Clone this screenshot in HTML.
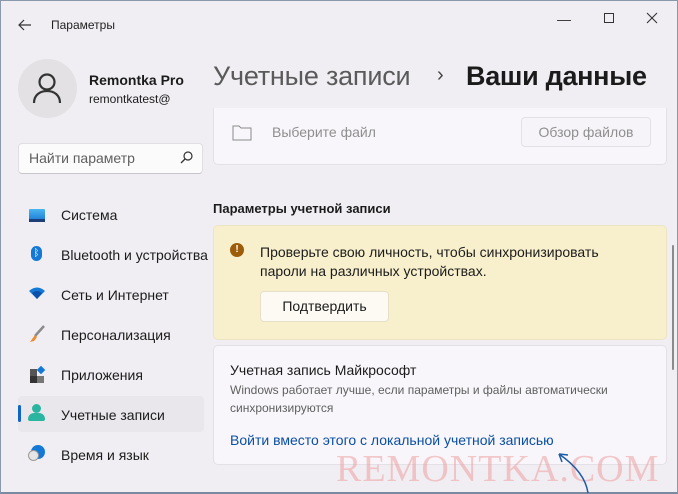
<!DOCTYPE html>
<html><head><meta charset="utf-8"><style>
*{margin:0;padding:0;box-sizing:border-box}
body{width:678px;height:494px;overflow:hidden;background:#f1eef3;font-family:"Liberation Sans","DejaVu Sans",sans-serif;color:#1b1b1b;position:relative}
.a{position:absolute;white-space:nowrap}
.frame{position:absolute;left:0;top:0;width:678px;height:494px;border:1px solid #8a98ab;border-bottom:2px solid #7a8aa0}
.card{position:absolute;background:#f8f6fa;border:1px solid #e3e0e6;border-radius:5px}
.nav{font-size:14px;color:#1b1b1b}
</style></head><body>
<div class="frame"></div>
<svg class="a" style="left:18px;top:19px" width="14" height="12" viewBox="0 0 14 12"><path d="M13 6H1M6 1L1 6l5 5" fill="none" stroke="#333" stroke-width="1.2"/></svg>
<div class="a" style="left:51px;top:18px;font-size:12px;color:#222">Параметры</div>
<div class="a" style="left:557px;top:11px;font-size:14px;color:#333">—</div>
<div class="a" style="left:604px;top:13px;width:10px;height:10px;border:1px solid #333"></div>
<svg class="a" style="left:646px;top:12px" width="12" height="12"><path d="M1 1l10 10M11 1L1 11" stroke="#333" stroke-width="1.1"/></svg>

<div class="a" style="left:18px;top:59px;width:59px;height:59px;border-radius:50%;background:#e3e1e4"></div>
<svg class="a" style="left:32px;top:72px" width="30" height="32" viewBox="0 0 30 32"><circle cx="15" cy="10" r="7.5" fill="none" stroke="#333" stroke-width="2.2"/><path d="M2 31c0-8 6-12 13-12s13 4 13 12" fill="none" stroke="#333" stroke-width="2.2"/></svg>
<div class="a" style="left:89px;top:72px;font-size:14px;font-weight:bold;color:#1b1b1b">Remontka Pro</div>
<div class="a" style="left:89px;top:92px;font-size:12px;color:#1b1b1b">remontkatest@</div>

<div class="a" style="left:18px;top:143px;width:185px;height:31px;background:#fbfbfc;border:1px solid #e0dde3;border-bottom-color:#c8c5cc;border-radius:4px"></div>
<div class="a" style="left:29px;top:150px;font-size:14px;color:#5f5f5f">Найти параметр</div>
<svg class="a" style="left:180px;top:151px" width="13" height="13"><circle cx="8" cy="5" r="4" fill="none" stroke="#333" stroke-width="1.2"/><path d="M5 8l-4 4" stroke="#333" stroke-width="1.3"/></svg>

<div class="a" style="left:18px;top:396px;width:186px;height:36px;background:#e9e6ec;border-radius:4px"></div>
<div class="a" style="left:18px;top:405px;width:3px;height:17px;background:#0f64c8;border-radius:2px"></div>
<div class="a" style="left:29px;top:209px;width:16px;height:12px;background:linear-gradient(#4bb6f0,#1a7ad4);border-radius:1px"></div>
<div class="a" style="left:29px;top:219px;width:16px;height:3px;background:#1c3f7a"></div>
<div class="a" style="left:31px;top:246px;width:11px;height:15px;border-radius:6px;background:#1479d6;color:#fff;font-size:10px;text-align:center;line-height:15px">ᛒ</div>
<svg class="a" style="left:28px;top:287px" width="18" height="13"><path d="M1 4Q9-3 17 4L9 12z" fill="#1479d6"/><path d="M4 6Q9 2 14 6L9 12z" fill="#0a4fa8"/></svg>
<svg class="a" style="left:29px;top:325px" width="16" height="18"><path d="M15 1L6 11" stroke="#8a8a8a" stroke-width="2.5"/><path d="M6 10l-5 7 4-1 3-4z" fill="#f08a28"/></svg>
<div class="a" style="left:30px;top:369px;width:7px;height:7px;background:#555"></div><div class="a" style="left:30px;top:376px;width:7px;height:7px;background:#333"></div><div class="a" style="left:37px;top:376px;width:7px;height:7px;background:#777"></div><div class="a" style="left:38px;top:367px;width:6px;height:6px;background:#1479d6;transform:rotate(45deg)"></div>
<div class="a" style="left:32px;top:404px;width:9px;height:9px;border-radius:50%;background:#2bb5a0"></div><div class="a" style="left:28px;top:413px;width:17px;height:8px;border-radius:6px 6px 2px 2px;background:#2bb5a0"></div>
<div class="a" style="left:31px;top:445px;width:14px;height:14px;border-radius:50%;background:#1479d6"></div><div class="a" style="left:28px;top:450px;width:11px;height:11px;border-radius:50%;background:#e6e6e6;border:1px solid #999"></div>
<div class="a nav" style="left:61px;top:207px">Система</div>
<div class="a nav" style="left:61px;top:247px">Bluetooth и устройства</div>
<div class="a nav" style="left:61px;top:287px">Сеть и Интернет</div>
<div class="a nav" style="left:61px;top:327px">Персонализация</div>
<div class="a nav" style="left:61px;top:367px">Приложения</div>
<div class="a nav" style="left:61px;top:407px">Учетные записи</div>
<div class="a nav" style="left:61px;top:447px">Время и язык</div>

<div class="a" style="left:213px;top:61px;font-size:27px;color:#5a5a5a;letter-spacing:-0.2px">Учетные записи</div>
<div class="a" style="left:437px;top:64px;font-size:20px;color:#444">›</div>
<div class="a" style="left:466px;top:61px;font-size:27px;font-weight:bold;color:#1b1b1b;letter-spacing:-0.3px">Ваши данные</div>

<div class="card" style="left:213px;top:108px;width:454px;height:57px;border-top:none;border-radius:0 0 5px 5px"></div>
<svg class="a" style="left:232px;top:124px" width="20" height="17"><path d="M1 2h6l2 2h10v12H1z" fill="none" stroke="#8a8a8a" stroke-width="1"/></svg>
<div class="a" style="left:272px;top:124px;font-size:14px;color:#8f8f8f">Выберите файл</div>
<div class="a" style="left:521px;top:117px;width:130px;height:30px;border:1px solid #e3e1e6;border-radius:4px;background:#f6f4f8;font-size:14px;color:#8f8f8f;text-align:center;line-height:28px">Обзор файлов</div>

<div class="a" style="left:213px;top:201px;font-size:13px;font-weight:bold;color:#1b1b1b">Параметры учетной записи</div>
<div class="card" style="left:213px;top:225px;width:454px;height:115px;background:#f8f0cd;border-color:#ebe4c2"></div>
<div class="a" style="left:230px;top:243px;width:14px;height:14px;border-radius:50%;background:#9d5c0a;color:#fff;font-size:10px;font-weight:bold;text-align:center;line-height:14px">!</div>
<div class="a" style="left:260px;top:243px;font-size:14px;line-height:19px;color:#1b1b1b">Проверьте свою личность, чтобы синхронизировать<br>пароли на различных устройствах.</div>
<div class="a" style="left:260px;top:291px;width:129px;height:31px;background:#fcfaf3;border:1px solid #e6e0c8;border-radius:4px;font-size:14px;text-align:center;line-height:29px">Подтвердить</div>

<div class="card" style="left:213px;top:345px;width:454px;height:120px"></div>
<div class="a" style="left:230px;top:362px;font-size:14px;color:#1b1b1b">Учетная запись Майкрософт</div>
<div class="a" style="left:230px;top:381px;font-size:12px;line-height:18px;color:#5f5f5f">Windows работает лучше, если параметры и файлы автоматически<br>синхронизируются</div>
<div class="a" style="left:230px;top:432px;font-size:14px;color:#0a4fa3">Войти вместо этого с локальной учетной записью</div>
<div class="a" style="left:336px;top:447px;font-size:38px;font-family:'Liberation Serif',serif;color:rgba(236,160,160,0.55);letter-spacing:1px">REMONTKA.COM</div>
<svg class="a" style="left:555px;top:450px" width="35" height="44"><path d="M33 43Q30 22 4 4" fill="none" stroke="#1d5aa8" stroke-width="1.5"/><path d="M4 4l9 1M4 4l3 8" stroke="#1d5aa8" stroke-width="1.5"/></svg>
<div class="a" style="left:672px;top:245px;width:2px;height:125px;background:#8a8a8a;border-radius:1px"></div>
</body></html>
